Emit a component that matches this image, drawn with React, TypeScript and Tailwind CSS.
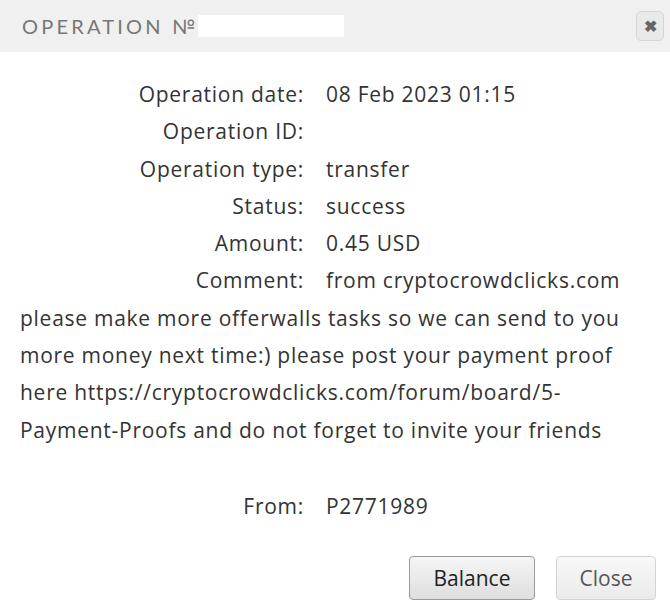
export default function App() {
  const rows = [
    { label: "Operation date:", value: "08 Feb 2023 01:15" },
    { label: "Operation ID:", value: "" },
    { label: "Operation type:", value: "transfer" },
    { label: "Status:", value: "success" },
    { label: "Amount:", value: "0.45 USD" },
  ]

  return (
    <div className="w-[670px] h-[613px] bg-white text-[#333]" style={{ fontFamily: '"Open Sans", sans-serif' }}>
      <div className="flex h-[52px] items-center justify-between bg-[#f0f0f0] pl-[22px] pr-[6px]">
        <div className="flex items-center">
          <span className="text-[20px] tracking-[0.16em] text-[#777]" style={{ fontFamily: "Lato, sans-serif" }}>
            OPERATION №
          </span>
          <span className="h-[22px] w-[146px] bg-white" />
        </div>
        <button className="flex h-[30px] w-[28px] items-center justify-center rounded-[5px] border border-[#d6d6d6] bg-[#e9e9e9] text-[16px] font-bold text-[#666]">
          ✖
        </button>
      </div>

      <div className="px-[20px] pt-[24px] text-[21px] leading-[37.3px] tracking-[0.035em]">
        {rows.map((r) => (
          <div key={r.label} className="flex">
            <div className="w-[284px] shrink-0 text-right">{r.label}</div>
            <div className="pl-[22px]">{r.value}</div>
          </div>
        ))}
        <div className="flex">
          <div className="w-[284px] shrink-0 text-right">Comment:</div>
          <div className="pl-[22px]">from cryptocrowdclicks.com</div>
        </div>
        <p>
          please make more offerwalls tasks so we can send to you more money next time:) please post your payment proof here https://cryptocrowdclicks.com/forum/board/5-Payment-Proofs and do not forget to invite your friends
        </p>
        <div className="mt-[39px] flex">
          <div className="w-[284px] shrink-0 text-right">From:</div>
          <div className="pl-[22px]">P2771989</div>
        </div>
      </div>

      <div className="mt-[31px] flex justify-end gap-[21px] pr-[14px]">
        <button className="h-[44px] w-[126px] rounded-[4px] border border-[#9a9a9a] bg-gradient-to-b from-[#f6f6f6] to-[#dedede] text-[21px] text-[#222]">
          Balance
        </button>
        <button className="h-[44px] w-[100px] rounded-[4px] border border-[#d4d4d4] bg-gradient-to-b from-[#f8f8f8] to-[#ebebeb] text-[21px] text-[#555]">
          Close
        </button>
      </div>
    </div>
  )
}
